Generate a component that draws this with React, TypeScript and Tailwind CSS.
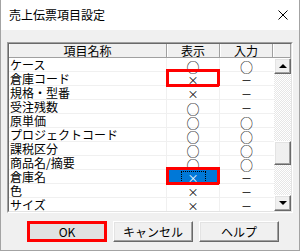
const rows = [
  { name: 'ケース', show: '○', input: '○' },
  { name: '倉庫コード', show: '×', input: '－', mark: true },
  { name: '規格・型番', show: '×', input: '－' },
  { name: '受注残数', show: '○', input: '－' },
  { name: '原単価', show: '○', input: '○' },
  { name: 'プロジェクトコード', show: '○', input: '○' },
  { name: '課税区分', show: '○', input: '○' },
  { name: '商品名/摘要', show: '○', input: '○' },
  { name: '倉庫名', show: '×', input: '－', mark: true, selected: true },
  { name: '色', show: '×', input: '－' },
  { name: 'サイズ', show: '×', input: '－' },
];

const raised = "border border-t-white border-l-white border-r-[#696969] border-b-[#696969] shadow-[inset_-1px_-1px_#a0a0a0,inset_1px_1px_#e3e3e3] bg-[#f0f0f0]";

const HeaderCell = ({ label, className }: { label: string; className: string }) => (
  <div className={`${className} h-[14px] flex items-center justify-center border-r border-b border-r-[#a0a0a0] border-b-[#a0a0a0] bg-[#f0f0f0] shadow-[inset_1px_0_#ffffff] leading-[13px]`}>
    {label}
  </div>
);

const Mark = ({ v }: { v: string }) =>
  v === '○'
    ? <span className="relative top-[2px] text-[13px] leading-[13px]">{v}</span>
    : <span className="relative top-[2px] text-[11px] leading-[13px]">{v}</span>;

const ScrollBar = () => (
  <div className="w-[17px] flex flex-col">
    <div className={`${raised} h-[16px] flex items-center justify-center`}>
      <div className="w-0 h-0 border-l-[4px] border-r-[4px] border-b-[4px] border-l-transparent border-r-transparent border-b-black" />
    </div>
    <div className="flex-1 flex flex-col bg-[repeating-conic-gradient(#e6e6e6_0%_25%,#ffffff_0%_50%)] bg-[length:2px_2px]">
      <div className="h-[67px]" />
      <div className={`${raised} h-[24px]`} />
    </div>
    <div className={`${raised} h-[16px] flex items-center justify-center`}>
      <div className="w-0 h-0 border-l-[4px] border-r-[4px] border-t-[4px] border-l-transparent border-r-transparent border-t-black" />
    </div>
  </div>
);

export default function App() {
  return (
    <div className="w-[300px] h-[251px] flex flex-col bg-[#f0f0f0] border border-t-0 border-[#a3a3a3] text-[12px] text-black antialiased font-['Noto_Sans_CJK_JP','Noto_Sans_CJK_SC',sans-serif]">
      <div className="h-[30px] bg-white flex items-center justify-between pl-[8px] pr-[11px]">
        <span className="leading-[14px]">売上伝票項目設定</span>
        <svg width="10" height="10" viewBox="0 0 10 10">
          <path d="M0.5 0.5 L9.5 9.5 M9.5 0.5 L0.5 9.5" stroke="#000" strokeWidth="1" fill="none" />
        </svg>
      </div>

      <div className="flex-1 flex flex-col pl-[6px] pt-[12px]">
        <div className="w-[286px] h-[171px] border border-t-[#a0a0a0] border-l-[#a0a0a0] border-r-white border-b-white">
          <div className="h-full flex flex-col bg-white border border-t-[#696969] border-l-[#696969] border-r-[#e3e3e3] border-b-[#e3e3e3]">
            <div className="flex">
              <HeaderCell label="項目名称" className="w-[158px]" />
              <HeaderCell label="表示" className="w-[53px]" />
              <HeaderCell label="入力" className="w-[53px]" />
              <HeaderCell label="" className="flex-1" />
            </div>
            <div className="flex-1 flex overflow-hidden">
              <div className="flex-1 flex flex-col">
                {rows.map((r) => (
                  <div key={r.name} className="flex h-[14px] border-b border-[#f0f0f0] leading-[13px]">
                    <div className="w-[158px] pl-[1px] flex items-center border-r border-[#f0f0f0] whitespace-nowrap">{r.name}</div>
                    <div className={`relative w-[53px] flex items-center justify-center border-r border-[#f0f0f0] ${r.selected ? 'bg-[#0078d7]' : ''}`}>
                      {r.selected ? (
                        <span className="px-[6px] h-[12px] flex items-center border border-dotted border-black">
                          <span className="relative top-[1px] text-[11px] leading-[10px] text-white">{r.show}</span>
                        </span>
                      ) : (
                        <Mark v={r.show} />
                      )}
                      {r.mark && <span className="absolute -left-[1px] -right-[1px] -top-[3px] -bottom-[2px] border-[3px] border-[#ff0000]" />}
                    </div>
                    <div className="w-[53px] flex items-center justify-center">
                      <Mark v={r.input} />
                    </div>
                  </div>
                ))}
              </div>
              <ScrollBar />
            </div>
          </div>
        </div>

        <div className="flex gap-[6px] pl-[20px] pt-[8px]">
          <button className="w-[80px] h-[21px] flex items-center justify-center border-[3px] border-[#ff0000] bg-[#e1e1e1] leading-[14px]">OK</button>
          <button className={`${raised} w-[80px] h-[21px] flex items-center justify-center leading-[14px]`}>キャンセル</button>
          <button className={`${raised} w-[80px] h-[21px] flex items-center justify-center leading-[14px]`}>ヘルプ</button>
        </div>
      </div>
    </div>
  );
}
